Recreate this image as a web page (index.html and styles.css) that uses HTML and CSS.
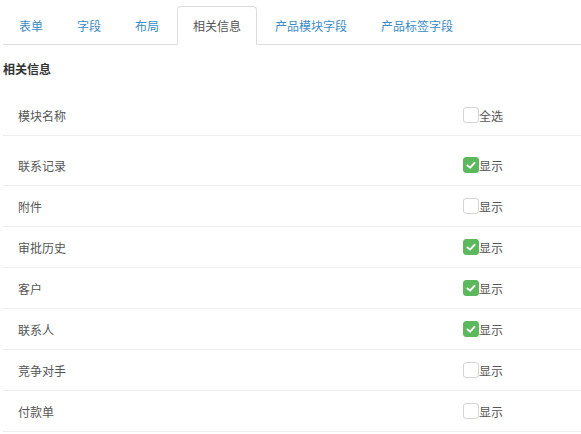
FILE: index.html
```html
<!DOCTYPE html>
<html lang="zh-CN">
<head>
    <meta charset="UTF-8">
    <title>相关信息</title>
    <link rel="stylesheet" href="styles.css">
</head>
<body>
    <div class="page">
        <!-- Tabs -->
        <ul class="nav-tabs">
            <li><a href="#">表单</a></li>
            <li><a href="#">字段</a></li>
            <li><a href="#">布局</a></li>
            <li class="active"><a href="#">相关信息</a></li>
            <li><a href="#">产品模块字段</a></li>
            <li><a href="#">产品标签字段</a></li>
        </ul>

        <h4 class="section-title">相关信息</h4>

        <!-- Header row -->
        <div class="row head">
            <span class="name">模块名称</span>
            <label class="check"><span class="box"></span>全选</label>
        </div>

        <div class="list">
            <div class="row">
                <span class="name">联系记录</span>
                <label class="check"><span class="box on"><svg viewBox="0 0 16 16"><polyline points="4,8.5 7,11 12,5.5"/></svg></span>显示</label>
            </div>
            <div class="row">
                <span class="name">附件</span>
                <label class="check"><span class="box"></span>显示</label>
            </div>
            <div class="row">
                <span class="name">审批历史</span>
                <label class="check"><span class="box on"><svg viewBox="0 0 16 16"><polyline points="4,8.5 7,11 12,5.5"/></svg></span>显示</label>
            </div>
            <div class="row">
                <span class="name">客户</span>
                <label class="check"><span class="box on"><svg viewBox="0 0 16 16"><polyline points="4,8.5 7,11 12,5.5"/></svg></span>显示</label>
            </div>
            <div class="row">
                <span class="name">联系人</span>
                <label class="check"><span class="box on"><svg viewBox="0 0 16 16"><polyline points="4,8.5 7,11 12,5.5"/></svg></span>显示</label>
            </div>
            <div class="row">
                <span class="name">竞争对手</span>
                <label class="check"><span class="box"></span>显示</label>
            </div>
            <div class="row">
                <span class="name">付款单</span>
                <label class="check"><span class="box"></span>显示</label>
            </div>
        </div>
    </div>
</body>
</html>
```

FILE: styles.css
```css
/* Basic Styling */
body {
    margin: 0;
    font-family: "Noto Sans CJK SC", "Liberation Sans", sans-serif;
    font-size: 12px;
    color: #555;
    background: #fff;
}

.page {
    padding-left: 3px;
}

/* Tabs */
.nav-tabs {
    display: flex;
    list-style: none;
    margin: 0;
    padding: 6px 0 0 0;
    border-bottom: 1px solid #ddd;
}

.nav-tabs li {
    margin-right: 2px;
    margin-bottom: -1px;
}

.nav-tabs a {
    display: block;
    padding: 0 15px;
    line-height: 37px;
    border: 1px solid transparent;
    border-radius: 4px 4px 0 0;
    color: #3b8cc6;
    text-decoration: none;
}

.nav-tabs .active a {
    color: #555;
    background: #fff;
    border-color: #ddd;
    border-bottom-color: #fff;
}

.section-title {
    margin: 0;
    padding: 14px 0 0 0;
    line-height: 20px;
    font-size: 12px;
    font-weight: bold;
    color: #333;
}

/* Rows */
.row {
    display: grid;
    grid-template-columns: 460px 1fr;
    align-items: center;
    height: 40px;
    border-bottom: 1px solid #eee;
}

.row.head {
    margin-top: 16px;
}

.list {
    margin-top: 9px;
}

.name {
    padding-left: 15px;
}

.check {
    display: flex;
    align-items: center;
    color: #555;
}

.box {
    width: 14px;
    height: 14px;
    border: 1px solid #d5d5d5;
    border-radius: 3px;
    background: #fff;
    display: flex;
}

.box.on {
    background: #5cb85c;
    border-color: #5cb85c;
}

.box svg {
    width: 14px;
    height: 14px;
    fill: none;
    stroke: #fff;
    stroke-width: 2.2;
    stroke-linecap: round;
    stroke-linejoin: round;
}
```
